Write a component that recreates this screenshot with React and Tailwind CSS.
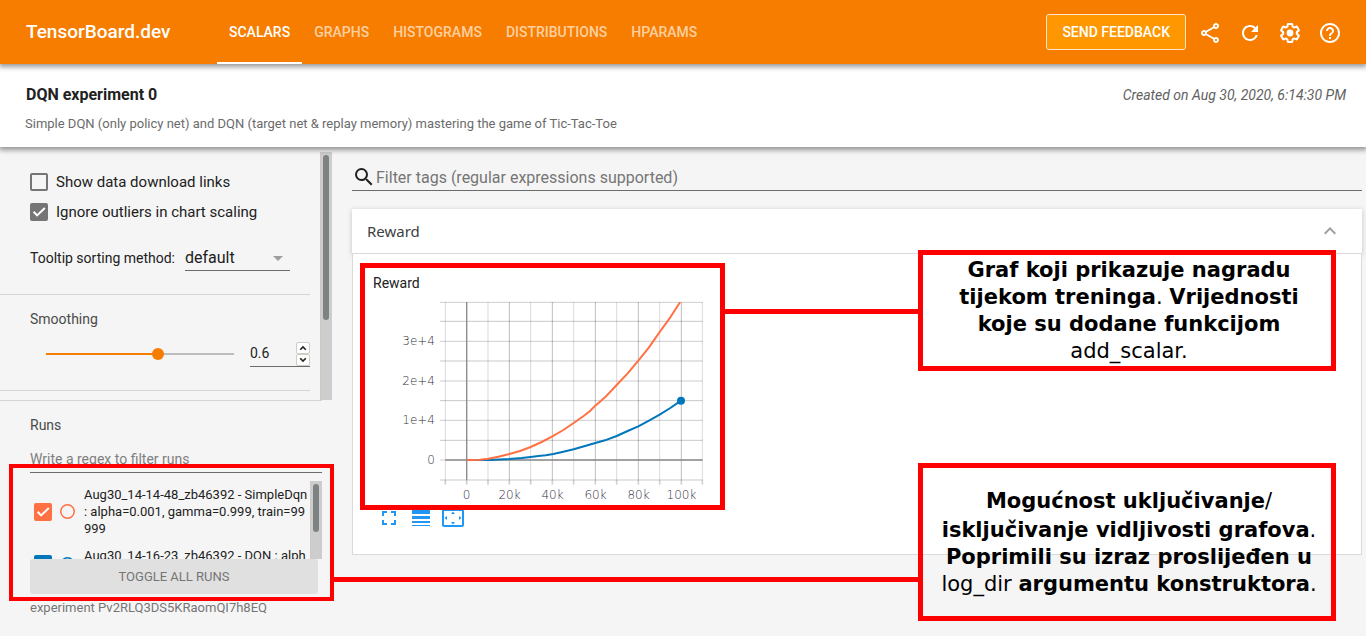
import { useState } from "react";
import {
  MdOutlineShare,
  MdRefresh,
  MdHelpOutline,
  MdSearch,
  MdFullscreen,
  MdLineWeight,
  MdSettingsOverscan,
  MdExpandLess,
  MdArrowDropDown,
} from "react-icons/md";

const TABS = ["SCALARS", "GRAPHS", "HISTOGRAMS", "DISTRIBUTIONS", "HPARAMS"];

function GearIcon() {
  return (
    <svg viewBox="0 0 24 24" className="size-6" aria-hidden="true">
      <path
        transform="translate(12 12) scale(.91) translate(-12 -12)"
        fill="none"
        stroke="currentColor"
        strokeWidth="2.2"
        strokeLinejoin="round"
        d="M19.43 12.98c.04-.32.07-.64.07-.98s-.03-.66-.07-.98l2.11-1.65c.19-.15.24-.42.12-.64l-2-3.46c-.12-.22-.39-.3-.61-.22l-2.49 1c-.52-.4-1.08-.73-1.69-.98l-.38-2.65C14.46 2.18 14.25 2 14 2h-4c-.25 0-.46.18-.49.42l-.38 2.65c-.61.25-1.17.59-1.69.98l-2.49-1c-.23-.09-.49 0-.61.22l-2 3.46c-.13.22-.07.49.12.64l2.11 1.65c-.04.32-.07.65-.07.98s.03.66.07.98l-2.11 1.65c-.19.15-.24.42-.12.64l2 3.46c.12.22.39.3.61.22l2.49-1c.52.4 1.08.73 1.69.98l.38 2.65c.03.24.24.42.49.42h4c.25 0 .46-.18.49-.42l.38-2.65c.61-.25 1.17-.59 1.69-.98l2.49 1c.23.09.49 0 .61-.22l2-3.46c.12-.22.07-.49-.12-.64l-2.11-1.65z"
      />
      <circle cx="12" cy="12" r="3.4" fill="currentColor" />
    </svg>
  );
}

function Header() {
  return (
    <header className="relative z-20 flex h-16 items-center bg-[#f77d00] pl-[26px] pr-4 text-white shadow-[0_2px_5px_1px_rgba(0,0,0,0.4)]">
      <h1 className="w-[191px] text-[19px] font-medium">TensorBoard.dev</h1>
      <nav className="flex h-full flex-1">
        {TABS.map((tab, i) => (
          <a
            key={tab}
            href={"#" + tab.toLowerCase()}
            className={
              i === 0
                ? "flex items-center border-y-2 border-t-transparent border-b-white px-3 text-sm font-medium"
                : "flex items-center px-3 text-sm font-medium text-[#fdd0a0]"
            }
          >
            {tab}
          </a>
        ))}
      </nav>
      <div className="flex items-center">
        <button className="mr-1 h-9 rounded-[3px] border border-[#ffe6c8] bg-[#ff9800] px-[15px] text-sm font-medium">
          SEND FEEDBACK
        </button>
        <div className="flex items-center pt-0.5">
          <button aria-label="Share" className="p-2"><MdOutlineShare className="size-6" /></button>
          <button aria-label="Reload" className="p-2"><MdRefresh className="size-6" /></button>
          <button aria-label="Settings" className="p-2"><GearIcon /></button>
          <button aria-label="Help" className="p-2"><MdHelpOutline className="size-6" /></button>
        </div>
      </div>
    </header>
  );
}

function ExperimentBar() {
  return (
    <section className="relative z-10 flex h-[83px] justify-between bg-white pl-[25px] pr-5 pt-5 shadow-[0_2px_5px_1px_rgba(0,0,0,0.4)]">
      <div>
        <h2 className="pl-px text-base leading-[22px] font-bold text-[#212121]">DQN experiment 0</h2>
        <p className="mt-2 text-[13px] leading-5 text-[#6b6b6b]">
          Simple DQN (only policy net) and DQN (target net &amp; replay memory) mastering the game of Tic-Tac-Toe
        </p>
      </div>
      <p className="text-sm leading-[22px] text-[#616161] italic">Created on Aug 30, 2020, 6:14:30 PM</p>
    </section>
  );
}

const BOX_STYLES = {
  gray: "border-[#757575] checked:bg-[#757575]",
  orange: "border-[#ff7043] checked:bg-[#ff7043]",
  blue: "border-[#0077bb] checked:bg-[#0077bb]",
};

function Checkbox({ id, tone, initial, label }) {
  const [on, setOn] = useState(initial);
  return (
    <span className="grid size-[18px] shrink-0">
      <input
        id={id}
        type="checkbox"
        aria-label={label}
        checked={on}
        onChange={() => setOn(!on)}
        className={"size-[18px] appearance-none rounded-xs border-2 [grid-area:1/1] " + BOX_STYLES[tone]}
      />
      {on && (
        <svg viewBox="0 0 18 18" className="pointer-events-none size-[18px] [grid-area:1/1]" aria-hidden="true">
          <path d="M3.6 8.8l3.5 3.6L14.8 5" fill="none" stroke="#fff" strokeWidth="2" />
        </svg>
      )}
    </span>
  );
}

function Settings() {
  const [smooth, setSmooth] = useState(0.6);
  const step = (d) => setSmooth((v) => Math.min(0.999, Math.max(0, Math.round((v + d) * 1000) / 1000)));
  const pct = (smooth / 0.999) * 100;
  return (
    <div className="flex h-[249px]">
      <div className="w-[322px] shrink-0 border-b border-[#d4d4d4] pr-3">
        <div className="border-b border-[#d4d4d4] pt-[15px] pb-[23px] pl-[30px] text-[#212121]">
          <div className="flex h-[30px] items-center gap-2">
            <Checkbox id="download" tone="gray" initial={false} />
            <label htmlFor="download" className="text-[15px]">Show data download links</label>
          </div>
          <div className="flex h-[30px] items-center gap-2">
            <Checkbox id="outliers" tone="gray" initial={true} />
            <label htmlFor="outliers" className="text-[15px]">Ignore outliers in chart scaling</label>
          </div>
          <div className="mt-[18px] flex items-center">
            <label htmlFor="sorting" className="w-[155px] text-sm">Tooltip sorting method:</label>
            <div className="grid w-[105px] items-center border-b border-[#6b6b6b]">
              <select id="sorting" className="h-[25px] appearance-none bg-transparent text-base [grid-area:1/1]">
                <option>default</option>
                <option>ascending</option>
                <option>descending</option>
                <option>nearest</option>
              </select>
              <MdArrowDropDown className="pointer-events-none size-6 justify-self-end text-[#9e9e9e] [grid-area:1/1]" />
            </div>
          </div>
        </div>
        <div className="border-b border-[#d4d4d4] pt-3.5 pb-[23px] pl-[30px]">
          <label htmlFor="smoothing" className="block text-sm leading-5 text-[#4a4a4a]">Smoothing</label>
          <div className="mt-3 flex items-center pl-4">
            <input
              id="smoothing"
              type="range"
              min="0"
              max="0.999"
              step="0.001"
              value={smooth}
              onChange={(e) => setSmooth(Number(e.target.value))}
              style={{ backgroundImage: `linear-gradient(to right, #f77d00 ${pct}%, #bdbdbd ${pct}%)` }}
              className="h-0.5 w-[188px] appearance-none [&::-webkit-slider-thumb]:size-3 [&::-webkit-slider-thumb]:appearance-none [&::-webkit-slider-thumb]:rounded-full [&::-webkit-slider-thumb]:bg-[#f77d00]"
            />
            <div className="ml-4 flex w-[60px] items-center border-b border-[#6b6b6b]">
              <input
                aria-label="Smoothing value"
                value={smooth}
                onChange={(e) => setSmooth(Number(e.target.value) || 0)}
                className="h-[25px] w-[46px] bg-transparent pb-0.5 text-sm text-[#212121]"
              />
              <div className="flex flex-col">
                <button aria-label="Increase" onClick={() => step(0.1)} className="grid h-3 w-3.5 place-items-center rounded-xs border border-[#d2cdc4] bg-white">
                  <svg viewBox="0 0 8 6" className="h-1.5 w-2"><path d="M1.2 4.8L4 2l2.8 2.8" fill="none" stroke="#222" strokeWidth="1.6" /></svg>
                </button>
                <button aria-label="Decrease" onClick={() => step(-0.1)} className="grid h-3 w-3.5 place-items-center rounded-xs border border-[#d2cdc4] bg-white">
                  <svg viewBox="0 0 8 6" className="h-1.5 w-2"><path d="M1.2 1.2L4 4l2.8-2.8" fill="none" stroke="#222" strokeWidth="1.6" /></svg>
                </button>
              </div>
            </div>
          </div>
        </div>
      </div>
      <div className="relative -ml-0.5 mb-px w-3 border-l border-[#d0c9c2] bg-[#cdcdcd] px-0.5 pt-[3px]">
        <div className="h-[165px] w-1.5 rounded-full bg-[#7d8382]" />
      </div>
    </div>
  );
}

const RUNS = [
  {
    name: "Aug30_14-14-48_zb46392 - SimpleDqn : alpha=0.001, gamma=0.999, train=99999",
    tone: "orange",
    ring: "text-[#ff7043]",
  },
  {
    name: "Aug30_14-16-23_zb46392 - DQN : alpha=0.001, gamma=0.999, train=99999",
    tone: "blue",
    ring: "text-[#0077bb]",
  },
];

function Runs() {
  return (
    <div className="pt-3.5 pr-2.5 pl-[30px]">
      <h3 className="text-sm leading-5 text-[#4a4a4a]">Runs</h3>
      <input
        aria-label="Write a regex to filter runs"
        placeholder="Write a regex to filter runs"
        className="mt-2.5 block h-7 w-full border-b border-[#6b6b6b] bg-transparent text-sm placeholder:text-[#808080]"
      />
      <div className="mt-2 flex h-[78px]">
        <ul className="flex flex-1 flex-col gap-2.5 overflow-hidden pt-[5px] pl-1">
          {RUNS.map((run) => (
            <li key={run.name} className="flex shrink-0 items-center">
              <Checkbox id={run.tone} tone={run.tone} initial={true} />
              <button aria-label={"Show only " + run.name} className="ml-2 shrink-0">
                <svg viewBox="0 0 15 15" className={"block size-[15px] " + run.ring}>
                  <circle cx="7.5" cy="7.5" r="6.7" fill="none" stroke="currentColor" strokeWidth="1.5" />
                </svg>
              </button>
              <label htmlFor={run.tone} className="ml-[9px] w-56 text-[13px] leading-[17px] break-all text-[#212121]">{run.name}</label>
            </li>
          ))}
        </ul>
        <div className="w-3 border-l border-[#d0c9c2] bg-[#cdcdcd] px-0.5 pt-[3px]">
          <div className="h-12 w-1.5 rounded-full bg-[#7d8382]" />
        </div>
      </div>
      <button className="block h-[35px] w-72 rounded-[3px] bg-[#e0e0e0] text-[13px] text-[#757575]">TOGGLE ALL RUNS</button>
      <p className="mt-1 text-[13px] leading-5 text-[#757575]">experiment Pv2RLQ3DS5KRaomQI7h8EQ</p>
    </div>
  );
}

const GRID_X = [271, 335, 399, 463, 527, 592, 656, 721, 785, 850, 914, 979, 1042];
const GRID_Y = [127, 184, 244, 303, 363, 422, 481, 541, 600, 660];
const X_LABELS = [["0", 93.5], ["20k", 136.5], ["40k", 179.5], ["60k", 222.5], ["80k", 265.5], ["100k", 308.5]];
const Y_LABELS = [["3e+4", 50], ["2e+4", 90], ["1e+4", 129], ["0", 169]];

function Chart() {
  return (
    <svg viewBox="0 0 340 207" className="block h-[207px] w-[340px]" role="img" aria-label="Reward chart">
      <g transform="translate(-18 -35) scale(.33333)" fill="none">
        {GRID_X.map((x, i) => (
          <g key={x} stroke="#000">
            <path d={`M${x} 126V660`} strokeWidth="3" strokeOpacity={i % 2 ? 0.26 : 0.15} />
            <path d={`M${x} 660V674`} strokeWidth="5" strokeOpacity=".18" />
          </g>
        ))}
        {GRID_Y.map((y, i) => (
          <path key={y} d={`M255 ${y}H1043`} stroke="#000" strokeWidth="3" strokeOpacity={i % 2 ? 0.22 : 0.2} />
        ))}
        <path d="M335 126V660M271 600H1043" stroke="#8c8c8c" strokeWidth="4" />
        <polyline
          stroke="#0077bb"
          strokeWidth="6"
          strokeLinejoin="round"
          points="335,600 400,600 463,597 500,594 527,591 550,588 572,586 595,582 625,575 656,568 690,558 721,549 750,541 785,528 818,513 850,499 882,482 914,464 946,444 978,422"
        />
        <polyline
          stroke="#ff7043"
          strokeWidth="6"
          strokeLinejoin="round"
          points="335,600 375,599 400,596 430,590 463,582 495,573 527,561 560,546 592,529 625,510 656,489 690,465 705,453 721,437 735,425 750,412 785,375 818,340 850,302 882,262 914,216 946,172 975,127"
        />
        <circle cx="978" cy="422" r="12" fill="#0077bb" />
      </g>
      <g fill="#32313f" fontSize="12" fontWeight="200" fontFamily="'DejaVu Sans', sans-serif">
        {Y_LABELS.map(([t, y]) => (
          <text key={t} x="62" y={y} textAnchor="end">{t}</text>
        ))}
        {X_LABELS.map(([t, x]) => (
          <text key={t} x={x} y="204" textAnchor="middle">{t}</text>
        ))}
      </g>
    </svg>
  );
}

function Dashboard() {
  return (
    <main className="min-w-0 flex-1 pt-3 pr-1 pl-5">
      <label className="flex h-[27px] items-center border-b border-[#6b6b6b]">
        <MdSearch className="size-6 text-[#212121]" />
        <input
          aria-label="Filter tags"
          placeholder="Filter tags (regular expressions supported)"
          className="flex-1 bg-transparent pt-0.5 text-base placeholder:text-[#757575]"
        />
      </label>
      <section className="mt-[18px]">
        <button className="flex h-[45px] w-full items-center justify-between border-b border-[#dadada] bg-white pr-5 pl-[15px] shadow-[0_1px_5px_rgba(0,0,0,0.2)]">
          <span className="font-['Noto_Sans',sans-serif] text-[15px] text-[#3c4043]">Reward</span>
          <MdExpandLess className="size-6 text-[#9e9e9e]" />
        </button>
        <div className="relative border border-t-0 border-[#dadada] bg-white px-5 pt-[19px] pb-5">
          <h4 className="text-sm leading-5 text-[#212121]">Reward</h4>
          <div className="mt-0.5">
            <Chart />
          </div>
          <div className="flex text-[#2196f3]">
            <button aria-label="Toggle fullscreen" className="p-1"><MdFullscreen className="size-6" /></button>
            <button aria-label="Toggle log scale" className="p-1"><MdLineWeight className="size-6" /></button>
            <button aria-label="Fit domain to data" className="p-1"><MdSettingsOverscan className="size-6" /></button>
          </div>
        </div>
      </section>
    </main>
  );
}

function Annotations() {
  return (
    <div className="pointer-events-none absolute inset-0 z-30 font-['DejaVu_Sans',sans-serif] text-[21px] leading-[27px] text-black">
      <div className="absolute top-[263px] left-[360px] h-[247px] w-[365px] border-5 border-[#f00]" />
      <div className="absolute top-[309px] left-[725px] h-[5px] w-[193px] bg-[#f00]" />
      <div className="absolute top-[250px] left-[918px] flex h-[121px] w-[418px] items-center justify-center border-5 border-[#f00] bg-white">
        <p className="pl-1 text-center whitespace-nowrap">
          <b className="font-bold">Graf koji prikazuje nagradu</b>
          <br />
          <b className="font-bold">tijekom treninga</b>. <b className="font-bold">Vrijednosti</b>
          <br />
          <b className="font-bold">koje su dodane funkcijom</b>
          <br />
          add_scalar.
        </p>
      </div>
      <div className="absolute top-[464px] left-[9px] h-[137px] w-[325px] border-4 border-[#f00]" />
      <div className="absolute top-[577px] left-[334px] h-[5px] w-[584px] bg-[#f00]" />
      <div className="absolute top-[463px] left-[918px] flex h-[158px] w-[418px] items-center justify-center border-5 border-[#f00]">
        <p className="pl-1 text-center whitespace-nowrap">
          <span className="block leading-[31px]">
            <b className="font-bold">Mogućnost uključivanje</b>/
          </span>
          <b className="font-bold">isključivanje vidljivosti grafova</b>.
          <br />
          <b className="font-bold">Poprimili su izraz proslijeđen u</b>
          <br />
          log_dir <b className="font-bold">argumentu konstruktora</b>.
        </p>
      </div>
    </div>
  );
}

export default function App() {
  return (
    <div className="relative flex min-h-screen flex-col bg-[#f5f5f5] font-[Roboto,sans-serif]">
      <Header />
      <ExperimentBar />
      <div className="flex flex-1 pt-[5px]">
        <aside className="w-[332px] shrink-0">
          <Settings />
          <Runs />
        </aside>
        <Dashboard />
      </div>
      <Annotations />
    </div>
  );
}
